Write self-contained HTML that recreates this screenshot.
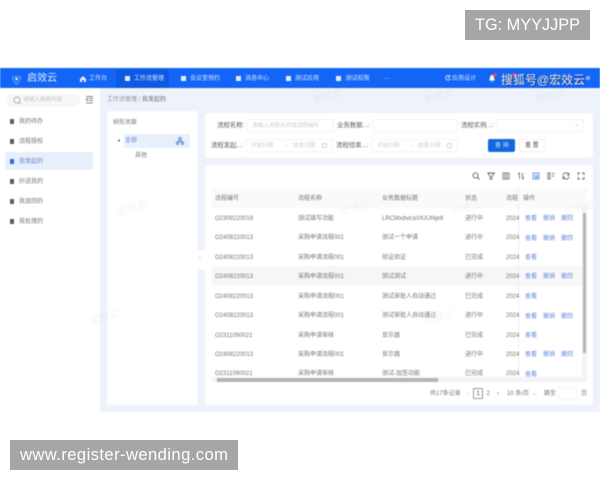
<!DOCTYPE html>
<html lang="zh">
<head>
<meta charset="utf-8">
<style>
html,body{margin:0;padding:0;background:#fff}
body{width:600px;height:480px;overflow:hidden;position:relative;font-family:"Liberation Sans","Noto Sans CJK SC",sans-serif}
.a{position:absolute}
.t{position:absolute;white-space:nowrap;line-height:10px;height:10px;font-size:6px;color:#747474}
#app{position:absolute;left:0;top:0;width:600px;height:480px;filter:blur(.55px)}
.nav{color:#dbe7ff;font-size:6px}
.ic{position:absolute;width:5px;height:5px;background:#dfeaff;box-shadow:inset 0 0 0 1px #eaf1ff}
.lnk{color:#5c89dc}
.lab{color:#5c5c5c;font-size:6.4px}
.ph{color:#cdcdcd;font-size:5.6px}
.box{position:absolute;background:#fff;border:1px solid #f3f4f7;box-sizing:border-box;height:13px}
.doc{position:absolute;width:4px;height:5px;background:#5c5c5c}
.wm{position:absolute;white-space:nowrap;font-size:10px;line-height:12px;color:rgba(90,100,130,.07);transform:rotate(-15deg)}
</style>
</head>
<body>
<div id="app">
<div class="a" style="left:0;top:68px;width:600px;height:344px;background:#eef2fb"></div>
<div class="a" style="left:0;top:68px;width:600px;height:20px;background:#1366f5"></div>
<div class="a" style="left:116px;top:70px;width:53px;height:18px;background:#0e59e2"></div>

<svg class="a" style="left:11px;top:74px" width="11" height="11" viewBox="0 0 11 11"><path d="M1.5 3.5C3.5 2 7.5 2 9.5 3.5C9 7 7 9 5.5 10C4 9 2 7 1.5 3.5Z" fill="#1e70ee" stroke="#7fb0ff" stroke-width=".8"/><circle cx="5.5" cy="5" r="1.2" fill="#fff"/></svg>
<div class="t" style="left:27px;top:73px;font-size:10px;line-height:12px;height:12px;color:#e8f0ff">启效云</div>

<svg class="a" style="left:80px;top:75.5px" width="6" height="6" viewBox="0 0 6 6"><path d="M0 3L3 0L6 3V6H4V4H2V6H0Z" fill="#eaf1ff"/></svg>
<div class="t nav" style="left:89px;top:74px">工作台</div>
<div class="ic" style="left:124.500px;top:75.500px"></div><div class="t nav" style="left:134px;top:74px">工作流管理</div>
<div class="ic" style="left:180.500px;top:75.500px"></div><div class="t nav" style="left:190px;top:74px">会议室预约</div>
<div class="ic" style="left:236px;top:75.500px"></div><div class="t nav" style="left:245px;top:74px">消息中心</div>
<div class="ic" style="left:286px;top:75.500px"></div><div class="t nav" style="left:295px;top:74px">测试应用</div>
<div class="ic" style="left:336px;top:75.500px"></div><div class="t nav" style="left:345.500px;top:74px">测试权限</div>
<div class="t nav" style="left:384px;top:74px">···</div>
<svg class="a" style="left:445px;top:75px" width="6" height="6" viewBox="0 0 6 6" fill="none" stroke="#dbe7ff" stroke-width=".9"><path d="M5 1.500A2.300 2.300 0 1 0 5.300 3.500M3 3L5.500 .5"/></svg>
<div class="t nav" style="left:452px;top:74px">应用设计</div>
<svg class="a" style="left:488px;top:74px" width="8" height="9" viewBox="0 0 8 9"><path d="M4 1C2.200 1 2 3 2 4.500L1 6.500H7L6 4.500C6 3 5.800 1 4 1ZM3 7.200H5L4 8.500Z" fill="#fff"/></svg>
<div class="a" style="left:493px;top:72.500px;width:4px;height:4px;border-radius:50%;background:#e9455a"></div>
<div class="a" style="left:512px;top:72.500px;width:4px;height:4px;border-radius:50%;background:#e9455a"></div>
<div class="a" style="left:586px;top:76px;width:4px;height:4px;background:#7fa8f5"></div>
<div class="t" style="left:501px;top:72px;font-size:12px;line-height:16px;height:16px;color:#f4f7ff;text-shadow:0 0 1px #123a8a,1px 1px 1px #123a8a">搜狐号@宏效云</div>

<!-- Sidebar -->
<div class="a" style="left:0;top:88px;width:100px;height:324px;background:#fff"></div>
<div class="a" style="left:6px;top:94px;width:74px;height:13px;border-radius:7px;background:#f6f7f9"></div>
<svg class="a" style="left:13px;top:96px" width="9" height="9" viewBox="0 0 9 9" fill="none" stroke="#999" stroke-width=".8"><circle cx="4" cy="4" r="3"/><path d="M6.200 6.200L8 8"/></svg>
<div class="t ph" style="left:23px;top:95px;color:#c4c4c4">请输入搜索内容</div>
<svg class="a" style="left:86px;top:96px" width="7" height="8" viewBox="0 0 7 8" fill="none" stroke="#666" stroke-width=".8"><path d="M0 .5H7M3 2.500H7M3 4.500H7M0 7H7"/><path d="M2 2L0 3.500L2 5" /></svg>
<div class="a" style="left:5px;top:152px;width:88px;height:18px;border-radius:2px;background:#e8effc"></div>
<div class="doc" style="left:10px;top:119px"></div><div class="t" style="left:19px;top:117px">我的待办</div>
<div class="doc" style="left:10px;top:139px"></div><div class="t" style="left:19px;top:137px">流程授权</div>
<div class="doc" style="left:10px;top:159px;background:#2d6bd8"></div><div class="t" style="left:19px;top:157px;color:#5a86d6">我发起的</div>
<div class="doc" style="left:10px;top:179px"></div><div class="t" style="left:19px;top:177px">抄送我的</div>
<div class="doc" style="left:10px;top:199px"></div><div class="t" style="left:19px;top:197px">我退回的</div>
<div class="doc" style="left:10px;top:219px"></div><div class="t" style="left:19px;top:217px">我处理的</div>

<div class="t" style="left:107px;top:95px;color:#909090">工作流管理 / <span style="color:#6c6c6c">我发起的</span></div>

<!-- Tree card -->
<div class="a" style="left:107px;top:111px;width:91px;height:294px;background:#fff;border-radius:3px"></div>
<div class="t" style="left:113px;top:118px">树形关联</div>
<div class="a" style="left:124px;top:134px;width:66px;height:14px;background:#e8effc"></div>
<div class="t" style="left:117px;top:136px;font-size:4px;color:#333">▼</div>
<div class="t" style="left:125px;top:136px;color:#5a86dc">全部</div>
<svg class="a" style="left:176px;top:137px" width="8" height="8" viewBox="0 0 8 8" fill="none" stroke="#3f6fc8" stroke-width=".8"><circle cx="4" cy="1.800" r="1.300"/><circle cx="1.500" cy="6.300" r="1.200"/><circle cx="6.500" cy="6.300" r="1.200"/><path d="M4 3V4.500M1.500 5V4.500H6.500V5"/></svg>
<div class="t" style="left:135px;top:151px;color:#7c7c7c">其他</div>

<!-- Form card -->
<div class="a" style="left:205px;top:113px;width:388px;height:45px;background:#fff;border-radius:3px"></div>
<div class="t lab" style="left:217px;top:120.500px">流程名称:</div>
<div class="box" style="left:247px;top:119px;width:87px"></div><div class="t ph" style="left:252px;top:120.500px">请输入流程名称或流程编号</div>
<div class="t lab" style="left:337px;top:120.500px">业务数据...:</div>
<div class="box" style="left:372px;top:119px;width:86px"></div>
<div class="t lab" style="left:461px;top:120.500px">流程实例...:</div>
<div class="box" style="left:496px;top:119px;width:88px"></div><div class="t ph" style="left:575px;top:120.500px">×</div>
<div class="t lab" style="left:211px;top:140.500px">流程发起...:</div>
<div class="box" style="left:246px;top:139px;width:87px"></div><div class="t ph" style="left:251px;top:140.500px">开始日期</div><div class="t ph" style="left:284px;top:140.500px">→</div><div class="t ph" style="left:293px;top:140.500px">结束日期</div>
<div class="a" style="left:322px;top:143px;width:5px;height:5px;border:1px solid #d4d4d4;box-sizing:border-box"></div>
<div class="t lab" style="left:336px;top:140.500px">流程结束...:</div>
<div class="box" style="left:371px;top:139px;width:87px"></div><div class="t ph" style="left:377px;top:140.500px">开始日期</div><div class="t ph" style="left:408px;top:140.500px">→</div><div class="t ph" style="left:418px;top:140.500px">结束日期</div>
<div class="a" style="left:447px;top:143px;width:5px;height:5px;border:1px solid #d4d4d4;box-sizing:border-box"></div>
<div class="a" style="left:488px;top:138.500px;width:27px;height:13.500px;background:#1366e0;border-radius:2px"></div>
<div class="t" style="left:495px;top:140.500px;color:#d6e4ff">查 询</div>
<div class="a" style="left:519px;top:138.500px;width:26px;height:13.500px;background:#fff;border:1px solid #f2f2f4;box-sizing:border-box;border-radius:2px"></div>
<div class="t" style="left:525px;top:140.500px;color:#555">重 置</div>

<!-- Table card -->
<div class="a" style="left:205px;top:165px;width:388px;height:240px;background:#fff;border-radius:3px"></div>
<div class="a" style="left:198px;top:250px;width:7px;height:20px;background:#fff"></div>
<div class="t" style="left:199px;top:253px;font-size:5px;color:#999">‹</div>

<svg class="a" style="left:472px;top:172px" width="8" height="8" viewBox="0 0 8 8" fill="none" stroke="#666" stroke-width=".9"><circle cx="3.500" cy="3.500" r="2.600"/><path d="M5.500 5.500L7.500 7.500"/></svg>
<svg class="a" style="left:487px;top:172px" width="8" height="8" viewBox="0 0 8 8" fill="none" stroke="#666" stroke-width=".9"><path d="M.8 1H7.200L4.800 4.500V7.200H3.200V4.500Z"/></svg>
<svg class="a" style="left:502px;top:172px" width="8" height="8" viewBox="0 0 8 8" fill="none" stroke="#777" stroke-width=".9"><rect x="1" y="1" width="6" height="6"/><path d="M3 1V7M5 1V7"/></svg>
<svg class="a" style="left:517px;top:172px" width="8" height="8" viewBox="0 0 8 8" fill="none" stroke="#777" stroke-width=".9"><path d="M2.500 7V1L1 2.500M5.500 1V7L7 5.500"/></svg>
<svg class="a" style="left:532px;top:172px" width="8" height="8" viewBox="0 0 8 8" fill="#dbe7fb" stroke="#6b9ae2" stroke-width=".9"><rect x="1" y="1" width="6" height="6"/><path d="M3 4H6M3 5.500H6" /></svg>
<svg class="a" style="left:547px;top:172px" width="8" height="8" viewBox="0 0 8 8" fill="none" stroke="#777" stroke-width="1"><path d="M1 1H3V7H1ZM5 1.500H7.500M5 4H7"/></svg>
<svg class="a" style="left:562px;top:172px" width="8" height="8" viewBox="0 0 8 8" fill="none" stroke="#666" stroke-width=".9"><path d="M1 3.500A3 3 0 0 1 6.800 2.800M7 4.500A3 3 0 0 1 1.200 5.200"/><path d="M7 1V3H5M1 7V5H3"/></svg>
<svg class="a" style="left:577px;top:172px" width="8" height="8" viewBox="0 0 8 8" fill="none" stroke="#666" stroke-width=".9"><path d="M1 3V1H3M5 1H7V3M7 5V7H5M3 7H1V5"/></svg>

<div class="a" style="left:212px;top:188px;width:375px;height:20px;background:#fafafa"></div>
<div class="a" style="left:212px;top:266px;width:306px;height:20px;background:#f6f6f7"></div>
<div class="a" style="left:519px;top:266px;width:64px;height:20px;background:#f8f8f9"></div>
<div class="a" style="left:518px;top:188px;width:1px;height:192px;background:#eceef1"></div>

<div class="t" style="left:215px;top:193.500px">流程编号</div>
<div class="t" style="left:298px;top:193.500px">流程名称</div>
<div class="t" style="left:382px;top:193.500px">业务数据标题</div>
<div class="t" style="left:465px;top:193.500px">状态</div>
<div class="t" style="left:506px;top:193.500px;width:12px;overflow:hidden">流程发</div>
<div class="t" style="left:523px;top:193.500px">操作</div>

<div class="t" style="left:215px;top:213.500px">O2309220018</div><div class="t" style="left:298px;top:213.500px">测试填写功能</div><div class="t" style="left:382px;top:213.500px">LRCMxdvicaVIUUf4je6</div><div class="t" style="left:465px;top:213.500px">进行中</div><div class="t" style="left:506px;top:213.500px">2024</div><div class="t lnk" style="left:525px;top:214px">查看</div><div class="t lnk" style="left:543px;top:214px">撤销</div><div class="t lnk" style="left:561px;top:214px">撤回</div>
<div class="t" style="left:215px;top:233px">O2408220013</div><div class="t" style="left:298px;top:233px">采购申请流程001</div><div class="t" style="left:382px;top:233px">测试一个申请</div><div class="t" style="left:465px;top:233px">进行中</div><div class="t" style="left:506px;top:233px">2024</div><div class="t lnk" style="left:525px;top:233.500px">查看</div><div class="t lnk" style="left:543px;top:233.500px">撤销</div><div class="t lnk" style="left:561px;top:233.500px">撤回</div>
<div class="t" style="left:215px;top:252.500px">O2408220013</div><div class="t" style="left:298px;top:252.500px">采购申请流程001</div><div class="t" style="left:382px;top:252.500px">验证验证</div><div class="t" style="left:465px;top:252.500px">已完成</div><div class="t" style="left:506px;top:252.500px">2024</div><div class="t lnk" style="left:525px;top:253px">查看</div>
<div class="t" style="left:215px;top:271.500px">O2408220013</div><div class="t" style="left:298px;top:271.500px">采购申请流程001</div><div class="t" style="left:382px;top:271.500px">测试测试</div><div class="t" style="left:465px;top:271.500px">进行中</div><div class="t" style="left:506px;top:271.500px">2024</div><div class="t lnk" style="left:525px;top:272px">查看</div><div class="t lnk" style="left:543px;top:272px">撤销</div><div class="t lnk" style="left:561px;top:272px">撤回</div>
<div class="t" style="left:215px;top:291.500px">O2408220013</div><div class="t" style="left:298px;top:291.500px">采购申请流程001</div><div class="t" style="left:382px;top:291.500px">测试审批人自动通过</div><div class="t" style="left:465px;top:291.500px">已完成</div><div class="t" style="left:506px;top:291.500px">2024</div><div class="t lnk" style="left:525px;top:292px">查看</div>
<div class="t" style="left:215px;top:311px">O2408220013</div><div class="t" style="left:298px;top:311px">采购申请流程001</div><div class="t" style="left:382px;top:311px">测试审批人自动通过</div><div class="t" style="left:465px;top:311px">进行中</div><div class="t" style="left:506px;top:311px">2024</div><div class="t lnk" style="left:525px;top:311.500px">查看</div><div class="t lnk" style="left:543px;top:311.500px">撤销</div><div class="t lnk" style="left:561px;top:311.500px">撤回</div>
<div class="t" style="left:215px;top:330.500px">O2311090021</div><div class="t" style="left:298px;top:330.500px">采购申请审核</div><div class="t" style="left:382px;top:330.500px">显示器</div><div class="t" style="left:465px;top:330.500px">已完成</div><div class="t" style="left:506px;top:330.500px">2024</div><div class="t lnk" style="left:525px;top:331px">查看</div>
<div class="t" style="left:215px;top:349.500px">O2408220013</div><div class="t" style="left:298px;top:349.500px">采购申请流程001</div><div class="t" style="left:382px;top:349.500px">显示器</div><div class="t" style="left:465px;top:349.500px">进行中</div><div class="t" style="left:506px;top:349.500px">2024</div><div class="t lnk" style="left:525px;top:350px">查看</div><div class="t lnk" style="left:543px;top:350px">撤销</div><div class="t lnk" style="left:561px;top:350px">撤回</div>
<div class="t" style="left:215px;top:369px">O2311090021</div><div class="t" style="left:298px;top:369px">采购申请审核</div><div class="t" style="left:382px;top:369px">测试-加签功能</div><div class="t" style="left:465px;top:369px">已完成</div><div class="t" style="left:506px;top:369px">2024</div><div class="t lnk" style="left:525px;top:369.500px">查看</div>

<!-- Faint watermarks -->
<div class="wm" style="left:313px;top:91px">宏效云</div>
<div class="wm" style="left:424px;top:91px">宏效云</div>
<div class="wm" style="left:535px;top:91px">宏效云</div>
<div class="wm" style="left:117px;top:203px">宏效云</div>
<div class="wm" style="left:340px;top:203px">宏效云</div>
<div class="wm" style="left:451px;top:203px">宏效云</div>
<div class="wm" style="left:565px;top:203px">宏效云</div>
<div class="wm" style="left:90px;top:312px">宏效云</div>
<div class="wm" style="left:425px;top:312px">宏效云</div>

<!-- Scrollbars -->
<div class="a" style="left:582px;top:205px;width:5px;height:175px;background:#f3f3f3"></div>
<div class="a" style="left:582.500px;top:213px;width:3.500px;height:140px;background:#b5b5b5"></div>
<div class="a" style="left:212px;top:377px;width:375px;height:5px;background:#f3f3f3"></div>
<div class="a" style="left:217px;top:378px;width:221px;height:3.500px;background:#b5b5b5"></div>

<!-- Pagination -->
<div class="t" style="left:430px;top:389px">共17条记录</div>
<div class="t" style="left:467px;top:389px;color:#bbb">‹</div>
<div class="a" style="left:473px;top:388px;width:10px;height:11px;border:1px solid #9a9a9a;box-sizing:border-box;background:#fff;border-radius:1px"></div>
<div class="t" style="left:476.500px;top:389px;color:#444">1</div>
<div class="t" style="left:486.500px;top:389px">2</div>
<div class="t" style="left:497px;top:389px">›</div>
<div class="t" style="left:507px;top:389px">10 条/页</div>
<svg class="a" style="left:532px;top:392px" width="5" height="4" viewBox="0 0 5 4" fill="none" stroke="#ccc" stroke-width=".7"><path d="M.5 1L2.500 3L4.500 1"/></svg>
<div class="t" style="left:544px;top:389px">跳至</div>
<div class="a" style="left:558px;top:387px;width:19px;height:13px;background:#fff;border:1px solid #f4f4f4;box-sizing:border-box"></div>
<div class="t" style="left:581px;top:389px">页</div>
</div>

<!-- Overlays (sharp) -->
<div class="a" style="left:465px;top:10px;width:125px;height:30px;background:#a6a6a6"></div>
<div class="t" style="left:475px;top:17px;height:17px;line-height:17px;font-size:16.300px;color:#fff">TG: MYYJJPP</div>
<div class="a" style="left:10px;top:440px;width:228px;height:30px;background:#a6a6a6"></div>
<div class="t" style="left:20px;top:446px;height:18px;line-height:18px;font-size:16.600px;letter-spacing:.42px;color:#fff">www.register-wending.com</div>
</body>
</html>
